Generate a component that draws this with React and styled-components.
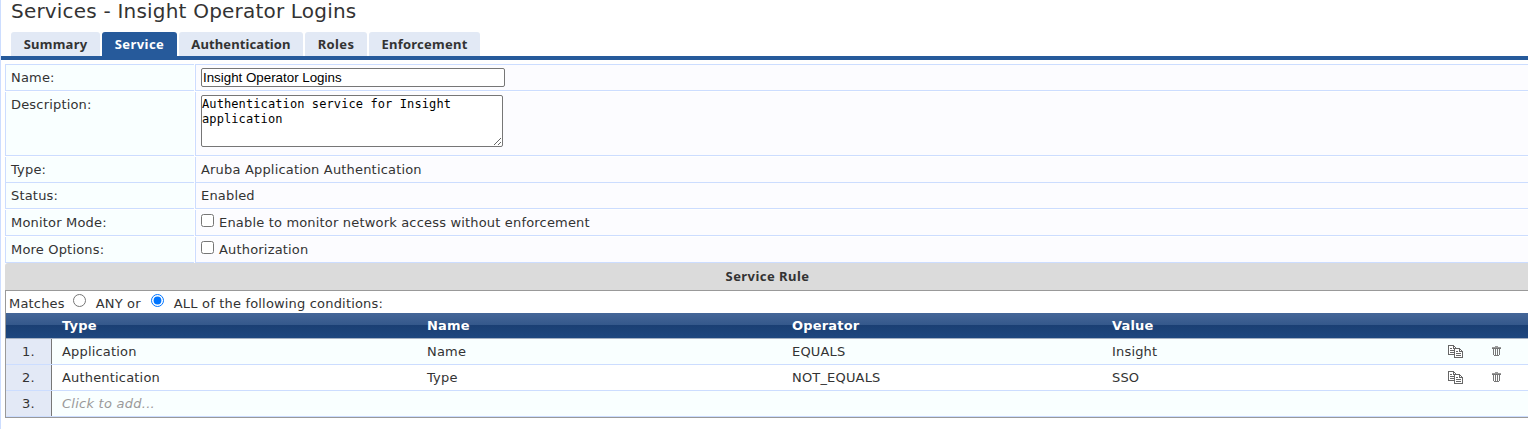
import styled, { createGlobalStyle, css } from "styled-components";

const GlobalStyle = createGlobalStyle`
  * {
    box-sizing: border-box;
  }

  body {
    margin: 0;
    overflow: hidden;
    background: #fff;
    color: #333;
    font-family: Verdana, "DejaVu Sans", sans-serif;
    font-size: 13px;
    letter-spacing: 0.18px;
  }
`;

const Page = styled.main`
  height: 429px;
  border-left: 1px solid #ccddff;
  white-space: nowrap;
`;

const Title = styled.h1`
  height: 32px;
  margin: 0;
  padding-left: 10px;
  font-size: 20px;
  font-weight: normal;
  line-height: 22px;
  letter-spacing: 0.2px;
`;

const Tabs = styled.nav`
  display: flex;
  gap: 2px;
  height: 28px;
  padding-left: 10px;
  border-bottom: 4px solid #265a9b;
`;

const Tab = styled.button`
  width: ${(props) => props.$width}px;
  height: 24px;
  padding: 0;
  border: 0;
  border-radius: 3px 3px 0 0;
  background: ${(props) => (props.$active ? "#265a9b" : "#e2e9f5")};
  color: ${(props) => (props.$active ? "#fff" : "#333")};
  font: bold 13px/24px "Noto Sans", sans-serif;
  letter-spacing: ${(props) => props.$spacing}px;
`;

const Form = styled.div`
  display: flex;
  flex-direction: column;
  gap: 1px;
  margin: 4px 0 0 4px;
`;

const FormRow = styled.div`
  display: grid;
  grid-template-columns: 189px 1fr;
  gap: 1px;
  height: ${(props) => props.$height}px;
`;

const cell = css`
  padding-left: 5px;
  border-left: 1px solid #ccddff;
  border-bottom: 1px solid #ccddff;
  ${(props) => props.$first && "border-top: 1px solid #ccddff;"}
`;

const Label = styled.div`
  ${cell}
  background: #f9ffff;
  line-height: 25px;
`;

const Field = styled.div`
  ${cell}
  display: flex;
  align-items: flex-start;
  background: #fcfcff;
  line-height: 25px;
`;

const NameInput = styled.input`
  width: 304px;
  height: 19px;
  margin: 3px 0 0;
  padding: 0 1px;
  border: 1px solid #767676;
  border-radius: 2px;
  color: #000;
  font: 13.333px "Liberation Sans", sans-serif;
  letter-spacing: 0;
`;

const DescriptionInput = styled.textarea`
  width: 302px;
  height: 52px;
  margin: 3px 0 0;
  padding: 1px 0;
  border: 1px solid #767676;
  border-radius: 2px;
  color: #000;
  font: 12px/15px "DejaVu Sans Mono", monospace;
  letter-spacing: 0.1px;
`;

const Checkbox = styled.input`
  width: 13px;
  height: 13px;
  margin: 4px 5px 0 0;
`;

const RuleTitle = styled.h2`
  height: 27px;
  margin: 0;
  padding-left: 2px;
  border-radius: 3px 0 0 0;
  background: #dbdbdb;
  font: bold 13px/27px "Noto Sans", sans-serif;
  letter-spacing: 0.45px;
  text-align: center;
`;

const RuleBox = styled.section`
  height: 128px;
  border: solid #999;
  border-width: 1px 0 1px 1px;
`;

const Matches = styled.div`
  display: flex;
  height: 22px;
  padding-left: 3px;
  line-height: 25px;
`;

const Radio = styled.input`
  width: 13px;
  height: 13px;
  margin: 3px 10px 0 8px;

  & + & {
    margin: 3px 10px 0 10px;
  }
`;

const ruleColumns = css`
  display: grid;
  grid-template-columns: 46px 10px 365px 365px 320px 336px 44px 1fr;
`;

const RuleHeader = styled.div`
  ${ruleColumns}
  height: 26px;
  border-bottom: 1px solid #a5b1c3;
  background: linear-gradient(#456698 0, #34588b 12px, #1a3f73 12px, #1e477f 100%);
  color: #fff;
  font-weight: bold;
  line-height: 25px;
`;

const RuleRow = styled.div`
  ${ruleColumns}
  height: 26px;
  border-bottom: 1px solid #ccddff;
  background: ${(props) => (props.$odd ? "#f9ffff" : "#fff")};
  line-height: 25px;
`;

const Index = styled.div`
  border-right: 1px solid #777;
  background: #e3e9f6;
  text-align: center;
`;

const Hint = styled.em`
  color: #999;
  letter-spacing: 0.25px;
`;

const Icon = styled.svg`
  display: block;
  margin-top: ${(props) => props.$top}px;
`;

const CopyIcon = () => (
  <Icon $top={6} width="15" height="13" fill="none" stroke="#666" shapeRendering="crispEdges">
    <path fill="#fff" d="M.5 .5h5l2 2v7h-7z" />
    <path d="M5.5 1v2h2M2 3.5h2M2 5.5h4M2 7.5h4" />
    <path fill="#fff" d="M6.5 3.5h5l3 3v6h-8z" />
    <path d="M11.5 3v3h3M8 6.5h2M8 8.5h5M8 10.5h5" />
  </Icon>
);

const TrashIcon = () => (
  <Icon $top={7} width="9" height="10" fill="none" stroke="#777" shapeRendering="crispEdges">
    <path stroke="#999" d="M3 .5h3M0 1.5h9" />
    <path d="M0 2.5h9M1.5 3v6M3.5 3v6M5.5 3v6M7.5 3v6M2 9.5h5" />
  </Icon>
);

const tabs = [
  { name: "Summary", width: 89, spacing: 0.25 },
  { name: "Service", width: 75, spacing: 0.45 },
  { name: "Authentication", width: 124, spacing: 0.1 },
  { name: "Roles", width: 62, spacing: 0.35 },
  { name: "Enforcement", width: 111, spacing: 0.25 },
];

const rules = [
  { type: "Application", name: "Name", operator: "EQUALS", value: "Insight" },
  { type: "Authentication", name: "Type", operator: "NOT_EQUALS", value: "SSO" },
];

const App = () => {
  return (
    <Page>
      <GlobalStyle />
      <Title>Services - Insight Operator Logins</Title>
      <Tabs>
        {tabs.map((tab) => (
          <Tab
            key={tab.name}
            $width={tab.width}
            $spacing={tab.spacing}
            $active={tab.name === "Service"}
          >
            {tab.name}
          </Tab>
        ))}
      </Tabs>
      <Form>
        <FormRow $height={27}>
          <Label $first>Name:</Label>
          <Field $first>
            <NameInput defaultValue="Insight Operator Logins" />
          </Field>
        </FormRow>
        <FormRow $height={64}>
          <Label>Description:</Label>
          <Field>
            <DescriptionInput defaultValue="Authentication service for Insight application" />
          </Field>
        </FormRow>
        <FormRow $height={25}>
          <Label>Type:</Label>
          <Field>Aruba Application Authentication</Field>
        </FormRow>
        <FormRow $height={26}>
          <Label>Status:</Label>
          <Field>Enabled</Field>
        </FormRow>
        <FormRow $height={26}>
          <Label>Monitor Mode:</Label>
          <Field>
            <Checkbox type="checkbox" />
            Enable to monitor network access without enforcement
          </Field>
        </FormRow>
        <FormRow $height={25}>
          <Label>More Options:</Label>
          <Field>
            <Checkbox type="checkbox" />
            Authorization
          </Field>
        </FormRow>
        <div>
          <RuleTitle>Service Rule</RuleTitle>
          <RuleBox>
            <Matches>
              Matches
              <Radio type="radio" name="match" />
              ANY or
              <Radio type="radio" name="match" defaultChecked />
              ALL of the following conditions:
            </Matches>
            <RuleHeader>
              <span />
              <span />
              <span>Type</span>
              <span>Name</span>
              <span>Operator</span>
              <span>Value</span>
            </RuleHeader>
            {rules.map((rule, i) => (
              <RuleRow key={rule.type} $odd={i % 2 === 0}>
                <Index>{i + 1}.</Index>
                <span />
                <span>{rule.type}</span>
                <span>{rule.name}</span>
                <span>{rule.operator}</span>
                <span>{rule.value}</span>
                <CopyIcon />
                <TrashIcon />
              </RuleRow>
            ))}
            <RuleRow $odd>
              <Index>3.</Index>
              <span />
              <Hint>Click to add...</Hint>
            </RuleRow>
          </RuleBox>
        </div>
      </Form>
    </Page>
  );
};

export default App;
